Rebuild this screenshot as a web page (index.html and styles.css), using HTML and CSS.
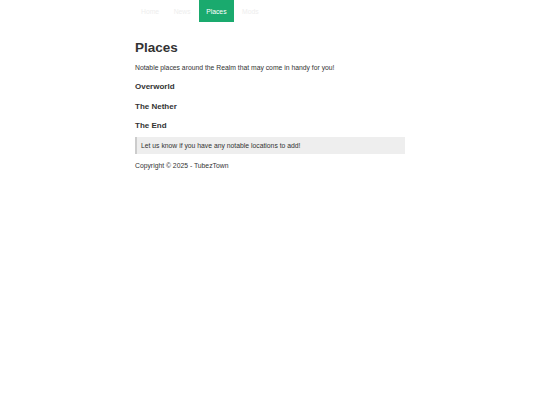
FILE: index.html
```html
<!DOCTYPE html>
<html>
<head>
<meta charset="utf-8">
<link rel="stylesheet" href="styles.css">
</head>
<body>
<div class="container">
  <nav class="nav">
    <a class="nav-link" href="#">Home</a>
    <a class="nav-link" href="#">News</a>
    <a class="nav-link active" href="#">Places</a>
    <a class="nav-link" href="#">Mods</a>
  </nav>
  <h1 class="title">Places</h1>
  <p class="intro">Notable places around the Realm that may come in handy for you!</p>
  <h3 class="section">Overworld</h3>
  <h3 class="section">The Nether</h3>
  <h3 class="section">The End</h3>
  <blockquote class="note">Let us know if you have any notable locations to add!</blockquote>
  <footer class="footer">Copyright © 2025 - TubezTown</footer>
</div>
</body>
</html>
```
FILE: styles.css
```css
html, body {
  margin: 0;
  padding: 0;
  background: #fff;
}
body {
  font-family: "Liberation Sans", Arial, sans-serif;
  color: #333;
}
.container {
  width: 270px;
  margin: 0 auto;
  display: flex;
  flex-direction: column;
}
.nav {
  display: flex;
  gap: 2.5px;
  height: 22px;
}
.nav-link {
  display: flex;
  align-items: center;
  padding: 0 6px;
  font-size: 6.8px;
  color: #eee;
  text-decoration: none;
}
.nav-link.active {
  background: #1aaa6e;
  color: #fff;
  padding: 0 7px;
}
.title {
  font-size: 13.5px;
  line-height: 16px;
  margin: 18px 0 0;
  font-weight: bold;
}
.intro {
  font-size: 6.8px;
  line-height: 8px;
  margin: 8px 0 0;
}
.section {
  font-size: 8px;
  line-height: 8px;
  margin: 11px 0 0;
  font-weight: bold;
}
.section + .section {
  margin-top: 11.5px;
}
.note {
  margin: 7px 0 0;
  background: #eee;
  border-left: 2px solid #ccc;
  padding: 4.5px 4px;
  font-size: 6.8px;
  line-height: 8px;
}
.footer {
  font-size: 6.8px;
  line-height: 8px;
  margin-top: 8px;
}
```
